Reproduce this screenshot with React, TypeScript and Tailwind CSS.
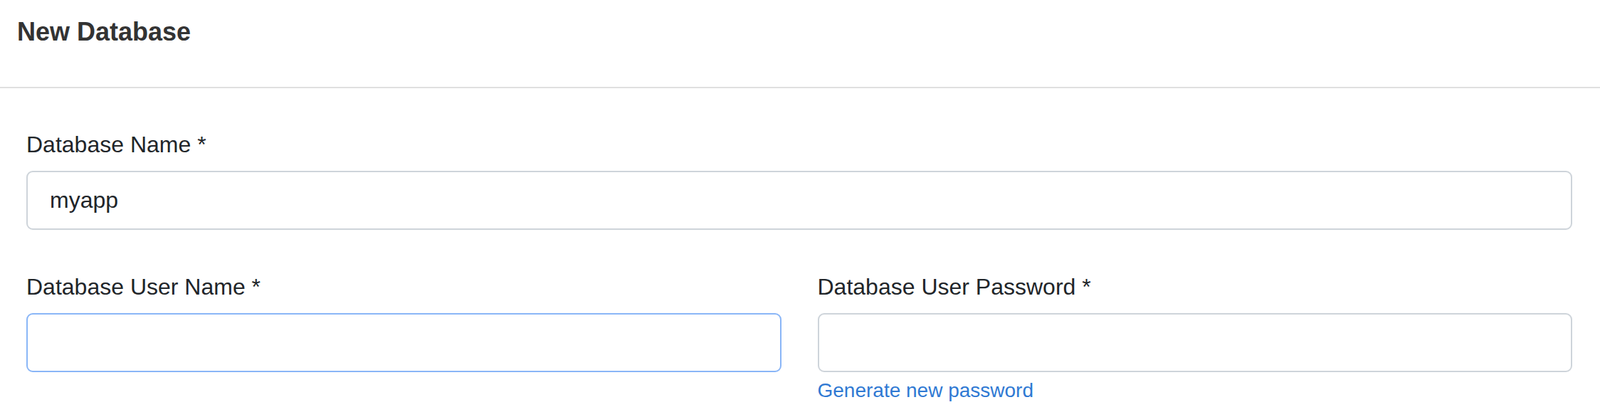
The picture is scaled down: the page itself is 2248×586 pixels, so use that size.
import React from "react";

export default function App() {
  const font = { fontFamily: '"Liberation Sans", Arial, Helvetica, sans-serif' };
  return (
    <div className="w-[2248px] h-[586px] bg-white overflow-hidden" style={font}>
      <div className="h-[124px] pt-[25px] px-[24px] border-b-2 border-[#e0e0e0]">
        <h1 className="text-[36px] leading-[40px] font-bold text-[#333333]">New Database</h1>
      </div>
      <div className="pt-[59px] pl-[37px] pr-[39px]">
        <div className="mb-[60px]">
          <label className="block text-[32px] leading-[40px] text-[#212529] mb-[17px]">Database Name *</label>
          <input
            defaultValue="myapp"
            className="block w-full h-[83px] px-[31px] text-[32px] text-[#212529] border-2 border-[#ced4da] rounded-[9px] outline-none bg-white"
            style={font}
          />
        </div>
        <div className="grid grid-cols-2 gap-x-[51px]">
          <div>
            <label className="block text-[32px] leading-[40px] text-[#212529] mb-[17px]">Database User Name *</label>
            <input
              className="block w-full h-[83px] px-[31px] text-[32px] text-[#212529] border-2 border-[#8ab6f7] rounded-[9px] outline-none bg-white"
              style={font}
            />
          </div>
          <div>
            <label className="block text-[32px] leading-[40px] text-[#212529] mb-[17px]">Database User Password *</label>
            <input
              className="block w-full h-[83px] px-[31px] text-[32px] text-[#212529] border-2 border-[#ced4da] rounded-[9px] outline-none bg-white"
              style={font}
            />
            <a className="block mt-[10px] text-[28px] leading-[32px] text-[#2f79d3] cursor-pointer">Generate new password</a>
          </div>
        </div>
      </div>
    </div>
  );
}
